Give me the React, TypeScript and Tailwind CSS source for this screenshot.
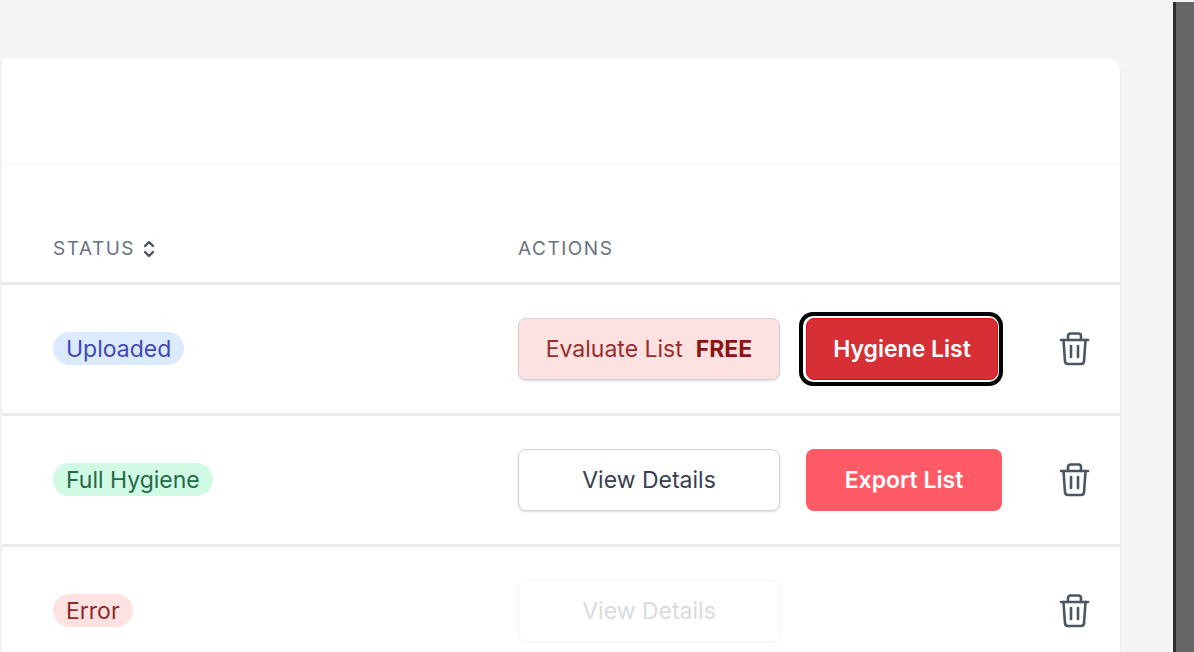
const font = "font-['Inter',sans-serif]";

function TrashIcon() {
  return (
    <svg width="32" height="36" viewBox="0 0 32 36" fill="none" stroke="#4b5563" strokeWidth="2.6" strokeLinecap="round" strokeLinejoin="round">
      <path d="M3 9h27" />
      <path d="M10 9V5a2.500 2.500 0 0 1 2.500-2.500h8A2.500 2.500 0 0 1 23 5v4" />
      <path d="M5.500 9l1.500 21.500a3 3 0 0 0 3 2.500h13a3 3 0 0 0 3-2.500L27.500 9" />
      <path d="M13 15v11" />
      <path d="M20 15v11" />
    </svg>
  );
}

function SortIcon() {
  return (
    <svg width="12" height="18" viewBox="0 0 12 18" fill="none" stroke="#4b5563" strokeWidth="2.4" strokeLinecap="round" strokeLinejoin="round">
      <path d="M2 6l4-4 4 4" />
      <path d="M2 12l4 4 4-4" />
    </svg>
  );
}

function Row({ badge, badgeClass, first, second }: { badge: string; badgeClass: string; first: React.ReactNode; second?: React.ReactNode }) {
  return (
    <div className="flex items-center h-[131px] pl-[51px] pb-[1px] border-b-[3px] border-[#e7e9ee] shrink-0">
      <div className="w-[465px]">
        <span className={`inline-flex items-center h-[33px] pt-[2px] px-[13px] rounded-full text-[23px] ${badgeClass}`}>{badge}</span>
      </div>
      <div className="w-[262px] mr-[26px]">{first}</div>
      <div className="w-[196px]">{second}</div>
      <div className="ml-[56px]">
        <TrashIcon />
      </div>
    </div>
  );
}

export default function App() {
  return (
    <div className={`flex h-[652px] w-[1194px] overflow-hidden bg-[#f3f4f6] ${font}`}>
      <main className="flex-1 pl-[2px] pr-[53px] pt-[58px]">
        <div className="h-[640px] bg-white rounded-tr-[13px] shadow-[0_1px_3px_rgba(0,0,0,0.08)] flex flex-col">
          <div className="h-[106px] border-b border-[#f3f4f6] shrink-0" />
          <div className="flex items-end h-[121px] pb-[19px] pl-[51px] border-b-[3px] border-[#e7e9ee] shrink-0 text-[#6b7280] text-[19px] tracking-[0.08em]">
            <div className="w-[465px] flex items-center gap-[8px]">
              <span>STATUS</span>
              <SortIcon />
            </div>
            <div>ACTIONS</div>
          </div>
          <Row
            badge="Uploaded"
            badgeClass="bg-[#dbeafe] text-[#3f48b5]"
            first={
              <button className="w-full h-[62px] pt-[2px] rounded-[8px] border border-[#d1d5db] shadow-[0_1px_2px_rgba(0,0,0,0.15)] bg-[#fee2e2] text-[#9b2c2c] text-[23px] flex items-center justify-center gap-[13px]">
                <span>Evaluate List</span>
                <span className="font-bold text-[#8b1414]">FREE</span>
              </button>
            }
            second={
              <button className="w-[192px] h-[62px] pt-[2px] rounded-[8px] border border-[#dc0b14] bg-[#d62f36] text-white text-[23px] font-semibold shadow-[-1px_0_0_2px_#ffffff,-1px_0_0_6px_#000000]">
                Hygiene List
              </button>
            }
          />
          <Row
            badge="Full Hygiene"
            badgeClass="bg-[#d1fae5] text-[#1f6b45]"
            first={
              <button className="w-full h-[62px] pt-[2px] rounded-[8px] border border-[#d1d5db] shadow-[0_1px_2px_rgba(0,0,0,0.15)] bg-white text-[#374151] text-[23px]">
                View Details
              </button>
            }
            second={
              <button className="w-full h-[62px] pt-[2px] rounded-[8px] bg-[#ff5a65] text-white text-[23px] font-semibold">
                Export List
              </button>
            }
          />
          <Row
            badge="Error"
            badgeClass="bg-[#fee2e2] text-[#8f2a2a]"
            first={
              <button className="w-full h-[62px] pt-[2px] rounded-[8px] border border-[#f3f4f6] shadow-[0_1px_2px_rgba(0,0,0,0.03)] bg-white text-[#d8dbe0] text-[23px]">
                View Details
              </button>
            }
          />
        </div>
      </main>
      <div className="w-[21px] mt-[2px] bg-[#666666] border-l-[3px] border-[#2e2e2e]" />
    </div>
  );
}
